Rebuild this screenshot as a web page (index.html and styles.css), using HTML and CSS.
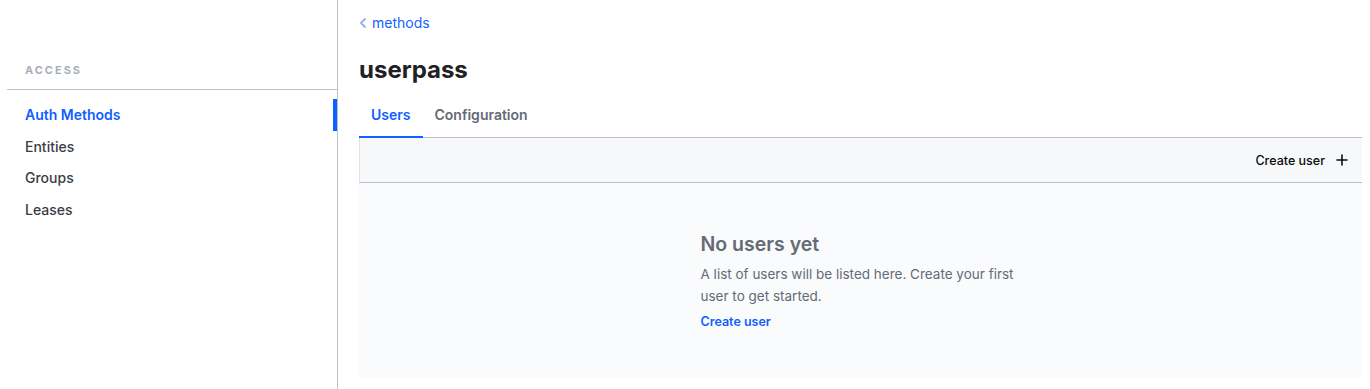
FILE: index.html
```html
<!DOCTYPE html>
<html lang="en">

<head>
  <meta charset="UTF-8">
  <meta name="viewport" content="width=device-width, initial-scale=1.0">
  <title>userpass - Access</title>
  <link rel="stylesheet" href="styles.css">
</head>

<body>
  <div class="layout">
    <aside class="sidebar">
      <div class="sidebar-header">
        <span class="sidebar-title">Access</span>
      </div>
      <ul class="nav-list">
        <li class="nav-item active">Auth Methods</li>
        <li class="nav-item">Entities</li>
        <li class="nav-item">Groups</li>
        <li class="nav-item">Leases</li>
      </ul>
    </aside>

    <main class="main">
      <a class="breadcrumb" href="#">
        <svg class="chevron" width="6" height="10" viewBox="0 0 6 10">
          <path d="M5 1 1 5l4 4" fill="none" stroke="currentColor" stroke-width="1.8" stroke-linecap="round" stroke-linejoin="round" />
        </svg>
        methods
      </a>
      <h1 class="page-title">userpass</h1>

      <nav class="tabs">
        <a class="tab active" href="#">Users</a>
        <a class="tab" href="#">Configuration</a>
      </nav>

      <div class="toolbar">
        <button class="toolbar-button">
          Create user
          <svg width="12" height="12" viewBox="0 0 12 12">
            <path d="M6 1v10M1 6h10" stroke="currentColor" stroke-width="1.6" stroke-linecap="round" />
          </svg>
        </button>
      </div>

      <div class="empty-state">
        <div class="empty-content">
          <h2>No users yet</h2>
          <p>A list of users will be listed here. Create your first user to get started.</p>
          <a href="#" class="empty-link">Create user</a>
        </div>
      </div>
    </main>
  </div>
</body>

</html>
```

FILE: styles.css
```css
body {
  margin: 0;
  padding: 0;
  background-color: #ffffff;
  color: #1f2124;
  font-family: Inter, "Noto Sans", sans-serif;
}

a {
  text-decoration: none;
}

.layout {
  display: flex;
  min-height: 389px;
}

.sidebar {
  width: 337px;
  flex-shrink: 0;
  border-right: 1px solid #bac1cc;
  padding-top: 60px;
}

.sidebar-header {
  margin-left: 7px;
  padding: 0 0 9px 18px;
  border-bottom: 1px solid #bac1cc;
}

.sidebar-title {
  display: block;
  font-size: 11px;
  line-height: 20px;
  font-weight: 700;
  letter-spacing: 0.18em;
  text-transform: uppercase;
  color: #a8aeb8;
}

.nav-list {
  list-style: none;
  margin: 9px 0 0 0;
  padding: 0;
}

.nav-item {
  position: relative;
  padding: 6px 25px;
  font-size: 14px;
  line-height: 19.7px;
  font-weight: 500;
  color: #3b3d45;
}

.nav-item.active {
  color: #1060ff;
  font-weight: 600;
}

.nav-item.active::after {
  content: "";
  position: absolute;
  right: 0;
  top: 0;
  bottom: 0;
  width: 4px;
  background-color: #1060ff;
}

.main {
  flex: 1;
  padding: 13px 8px 12px 21px;
}

.breadcrumb {
  display: flex;
  align-items: center;
  gap: 6px;
  color: #1563ff;
  font-size: 14px;
  line-height: 20px;
  padding-left: 1px;
}

.chevron {
  color: #8fb3f7;
}

.page-title {
  margin: 21px 0 0 0;
  font-size: 24px;
  line-height: 32px;
  font-weight: 700;
  color: #1f2124;
}

.tabs {
  display: flex;
  margin-top: 12px;
  border-bottom: 1px solid #bac1cc;
}

.tab {
  padding: 7px 12px 11px;
  margin-bottom: -1px;
  font-size: 14px;
  line-height: 20px;
  font-weight: 600;
  color: #656a76;
  border-bottom: 2px solid transparent;
}

.tab.active {
  color: #1060ff;
  border-bottom-color: #1060ff;
}

.toolbar {
  display: flex;
  justify-content: flex-end;
  align-items: center;
  height: 44px;
  background-color: #f7f8fa;
  border-left: 1px solid #dfe2e7;
  border-bottom: 1px solid #bac1cc;
  padding-right: 14px;
}

.toolbar-button {
  display: flex;
  align-items: center;
  gap: 11px;
  background: none;
  border: 0;
  padding: 0;
  font-family: Inter, "Noto Sans", sans-serif;
  font-size: 12.5px;
  font-weight: 500;
  color: #0c0c0e;
}

.empty-state {
  background-color: #fafbfc;
  padding: 47px 0 45px;
}

.empty-content {
  max-width: 320px;
  margin: 0 auto;
}

.empty-content h2 {
  margin: 0;
  font-size: 19.5px;
  line-height: 28px;
  font-weight: 600;
  color: #656a76;
}

.empty-content p {
  margin: 5px 0 0 0;
  font-size: 13.5px;
  line-height: 22px;
  color: #656a76;
}

.empty-link {
  display: block;
  margin-top: 5px;
  font-size: 12.5px;
  line-height: 20px;
  font-weight: 600;
  color: #1060ff;
}
```
